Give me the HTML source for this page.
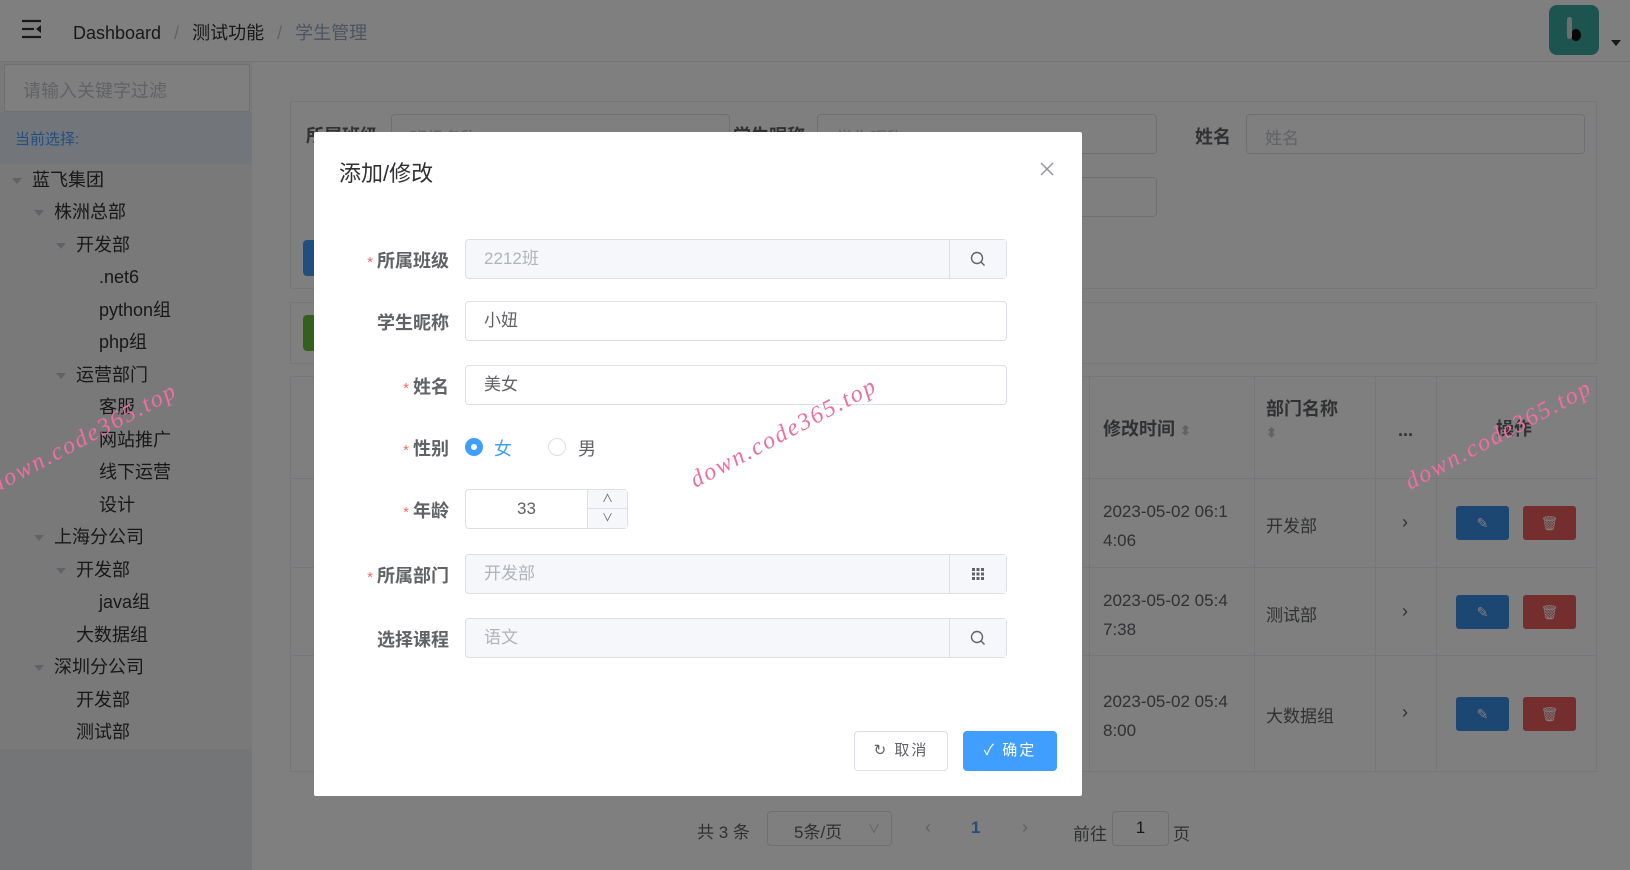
<!DOCTYPE html>
<html><head><meta charset="utf-8"><style>
*{box-sizing:border-box;margin:0;padding:0}
body{width:1630px;height:870px;position:relative;overflow:hidden;background:#fff;font-family:"Liberation Sans","Noto Sans CJK SC",sans-serif;color:#303133;font-size:18px}
.a{position:absolute}
.hdr{left:0;top:0;width:1630px;height:62px;border-bottom:1px solid #e6e6e6;background:#fff}
.side{left:0;top:62px;width:252px;height:808px;background:#f2f3f5}
.tree div{position:absolute;font-size:18px;line-height:24px;height:24px;color:#303133;white-space:nowrap}
.tri{display:inline-block;width:0;height:0;border-left:5px solid transparent;border-right:5px solid transparent;border-top:6px solid #c0c4cc;margin-right:10px;vertical-align:middle}
.card{border:1px solid #ebeef5;background:#fff}
.inp{border:1px solid #dcdfe6;border-radius:4px;background:#fff;white-space:nowrap}
.ov{left:0;top:0;width:1630px;height:870px;background:rgba(0,0,0,.5)}
.modal{left:314px;top:132px;width:768px;height:664px;background:#fff;border-radius:2px}
.lab{position:absolute;right:0;width:150px;text-align:right;font-weight:bold;font-size:18px;color:#606266}
.lab b{color:#f56c6c;font-weight:normal;margin-right:4px;font-size:15px}
.fi{position:absolute;left:151px;width:542px;height:40px;border:1px solid #dcdfe6;border-radius:4px;font-size:17px;padding-left:18px;line-height:38px}
.dis{background:#f5f7fa;color:#b0b3b9}
.app{position:absolute;right:0;top:0;width:57px;height:38px;border-left:1px solid #dcdfe6;background:#f5f7fa;display:flex;align-items:center;justify-content:center}
.wm{position:absolute;color:#f06ea0;font-family:"Liberation Serif",serif;font-size:24px;letter-spacing:2px;transform:rotate(-28deg);white-space:nowrap;font-style:italic}
.th{font-weight:bold;color:#606266;font-size:18px}
.ph{color:#c0c4cc;font-size:17px;padding:9px 18px}
.btn{display:flex;align-items:center;justify-content:center}
</style></head><body>
<div class="a hdr">
  <svg class="a" style="left:21px;top:19px" width="22" height="20" viewBox="0 0 22 20"><g stroke="#303133" stroke-width="2.2"><line x1="1" y1="2" x2="20" y2="2"/><line x1="1" y1="10" x2="13" y2="10"/><line x1="1" y1="18" x2="20" y2="18"/></g><path d="M20 6 L15 10 L20 14Z" fill="#303133"/></svg>
  <div class="a" style="left:73px;top:19px;font-size:18px;color:#303133">Dashboard <span style="color:#c0c4cc;margin:0 8px">/</span> 测试功能 <span style="color:#c0c4cc;margin:0 8px">/</span> <span style="color:#97a8be">学生管理</span></div>
  <div class="a" style="left:1549px;top:5px;width:50px;height:50px;border-radius:8px;background:#3aa8a0">
    <div class="a" style="left:22px;top:24px;width:10px;height:12px;border-radius:50%;background:#111"></div>
    <div class="a" style="left:18px;top:12px;width:5px;height:22px;background:#ddd;border-radius:3px"></div>
  </div>
  <div class="a" style="left:1611px;top:40px;width:0;height:0;border-left:5px solid transparent;border-right:5px solid transparent;border-top:6px solid #303133"></div>
</div>
<div class="a side">
  <div class="a inp" style="left:4px;top:2px;width:246px;height:48px;border-radius:2px;padding:12px 18px;color:#c0c4cc;font-size:18px">请输入关键字过滤</div>
  <div class="a" style="left:0;top:50px;width:252px;height:52px;background:#e4ecf7"><span class="a" style="left:15px;top:16px;font-size:15px;color:#409eff">当前选择:</span></div>
  <div class="tree">
    <div style="left:12px;top:106px"><span class="tri"></span>蓝飞集团</div>
    <div style="left:34px;top:138px"><span class="tri"></span>株洲总部</div>
    <div style="left:56px;top:171px"><span class="tri"></span>开发部</div>
    <div style="left:99px;top:203px">.net6</div>
    <div style="left:99px;top:236px">python组</div>
    <div style="left:99px;top:268px">php组</div>
    <div style="left:56px;top:301px"><span class="tri"></span>运营部门</div>
    <div style="left:99px;top:333px">客服</div>
    <div style="left:99px;top:366px">网站推广</div>
    <div style="left:99px;top:398px">线下运营</div>
    <div style="left:99px;top:431px">设计</div>
    <div style="left:34px;top:463px"><span class="tri"></span>上海分公司</div>
    <div style="left:56px;top:496px"><span class="tri"></span>开发部</div>
    <div style="left:99px;top:528px">java组</div>
    <div style="left:76px;top:561px">大数据组</div>
    <div style="left:34px;top:593px"><span class="tri"></span>深圳分公司</div>
    <div style="left:76px;top:626px">开发部</div>
    <div style="left:76px;top:658px">测试部</div>
  </div>
  <div class="a" style="left:0;top:687px;width:252px;height:121px;background:#e9eaee"></div>
</div>
<div class="a card" style="left:290px;top:101px;width:1307px;height:188px"></div>
<div class="a th" style="left:306px;top:122px">所属班级</div>
<div class="a inp ph" style="left:391px;top:114px;width:339px;height:40px">班级名称</div>
<div class="a th" style="left:733px;top:122px">学生昵称</div>
<div class="a inp ph" style="left:817px;top:114px;width:340px;height:40px">学生昵称</div>
<div class="a inp" style="left:817px;top:177px;width:340px;height:40px"></div>
<div class="a th" style="left:1195px;top:123px;color:#606266">姓名</div>
<div class="a inp ph" style="left:1246px;top:114px;width:339px;height:40px">姓名</div>
<div class="a" style="left:303px;top:240px;width:20px;height:36px;background:#409eff;border-radius:4px"></div>
<div class="a card" style="left:290px;top:302px;width:1307px;height:62px"></div>
<div class="a" style="left:303px;top:315px;width:20px;height:36px;background:#67c23a;border-radius:4px"></div>
<div class="a card" style="left:290px;top:376px;width:1307px;height:396px"></div>
<div class="a" style="left:1089px;top:376px;width:1px;height:396px;background:#ebeef5"></div>
<div class="a" style="left:1254px;top:376px;width:1px;height:396px;background:#ebeef5"></div>
<div class="a" style="left:1375px;top:376px;width:1px;height:396px;background:#ebeef5"></div>
<div class="a" style="left:1436px;top:376px;width:1px;height:396px;background:#ebeef5"></div>
<div class="a" style="left:290px;top:478px;width:1307px;height:1px;background:#ebeef5"></div>
<div class="a" style="left:290px;top:567px;width:1307px;height:1px;background:#ebeef5"></div>
<div class="a" style="left:290px;top:655px;width:1307px;height:1px;background:#ebeef5"></div>
<div class="a th" style="left:1103px;top:415px">修改时间 <span style="color:#c0c4cc;font-size:13px">⬍</span></div>
<div class="a th" style="left:1266px;top:395px">部门名称<br><span style="color:#c0c4cc;font-size:13px">⬍</span></div>
<div class="a th" style="left:1398px;top:420px">...</div>
<div class="a th" style="left:1496px;top:415px">操作</div>
<div class="a" style="left:1103px;top:497px;line-height:29px;font-size:17px;color:#606266">2023-05-02 06:1<br>4:06</div>
<div class="a" style="left:1103px;top:586px;line-height:29px;font-size:17px;color:#606266">2023-05-02 05:4<br>7:38</div>
<div class="a" style="left:1103px;top:687px;line-height:29px;font-size:17px;color:#606266">2023-05-02 05:4<br>8:00</div>
<div class="a" style="left:1266px;top:512px;font-size:17px;color:#606266">开发部</div>
<div class="a" style="left:1266px;top:601px;font-size:17px;color:#606266">测试部</div>
<div class="a" style="left:1266px;top:702px;font-size:17px;color:#606266">大数据组</div>
<div class="a" style="left:1402px;top:512px;color:#606266">›</div>
<div class="a" style="left:1402px;top:601px;color:#606266">›</div>
<div class="a" style="left:1402px;top:702px;color:#606266">›</div>
<div class="a btn" style="left:1456px;top:506px;width:53px;height:34px;background:#3a8ee6;border-radius:3px;color:#fff;font-size:14px">✎</div>
<div class="a btn" style="left:1523px;top:506px;width:53px;height:34px;background:#e85c5c;border-radius:3px;color:#fff;font-size:14px">🗑</div>
<div class="a btn" style="left:1456px;top:595px;width:53px;height:34px;background:#3a8ee6;border-radius:3px;color:#fff;font-size:14px">✎</div>
<div class="a btn" style="left:1523px;top:595px;width:53px;height:34px;background:#e85c5c;border-radius:3px;color:#fff;font-size:14px">🗑</div>
<div class="a btn" style="left:1456px;top:697px;width:53px;height:34px;background:#3a8ee6;border-radius:3px;color:#fff;font-size:14px">✎</div>
<div class="a btn" style="left:1523px;top:697px;width:53px;height:34px;background:#e85c5c;border-radius:3px;color:#fff;font-size:14px">🗑</div>
<div class="a" style="left:697px;top:818px;font-size:17px;color:#606266">共 3 条</div>
<div class="a inp" style="left:767px;top:811px;width:125px;height:35px;padding:6px 26px;font-size:17px;color:#606266">5条/页</div>
<div class="a" style="left:868px;top:820px;color:#c0c4cc;font-size:12px">∨</div>
<div class="a" style="left:925px;top:817px;color:#c0c4cc">‹</div>
<div class="a" style="left:971px;top:818px;color:#409eff;font-weight:bold;font-size:17px">1</div>
<div class="a" style="left:1022px;top:817px;color:#c0c4cc">›</div>
<div class="a" style="left:1073px;top:820px;font-size:17px;color:#606266">前往</div>
<div class="a inp" style="left:1112px;top:811px;width:57px;height:35px;text-align:center;padding-top:6px;font-size:17px">1</div>
<div class="a" style="left:1173px;top:820px;font-size:17px;color:#606266">页</div>

<div class="a ov"></div>

<div class="a modal">
  <div class="a" style="left:25px;top:24px;font-size:22px;color:#303133">添加/修改</div>
  <svg class="a" style="left:726px;top:30px" width="14" height="14" viewBox="0 0 14 14"><path d="M1 1L13 13M13 1L1 13" stroke="#909399" stroke-width="1.5"/></svg>
  <div class="a" style="left:0;top:107px;width:768px;height:40px"><div class="lab" style="right:633px;top:8px"><b>*</b>所属班级</div>
    <div class="fi dis" style="top:0">2212班<div class="app"><svg width="16" height="16" viewBox="0 0 16 16"><circle cx="7" cy="7" r="5.5" fill="none" stroke="#606266" stroke-width="1.4"/><path d="M11 11L14.5 14.5" stroke="#606266" stroke-width="1.4"/></svg></div></div></div>
  <div class="a" style="left:0;top:169px;width:768px;height:40px"><div class="lab" style="right:633px;top:8px">学生昵称</div>
    <div class="fi" style="top:0;color:#606266">小妞</div></div>
  <div class="a" style="left:0;top:233px;width:768px;height:40px"><div class="lab" style="right:633px;top:8px"><b>*</b>姓名</div>
    <div class="fi" style="top:0;color:#606266">美女</div></div>
  <div class="a" style="left:0;top:295px;width:768px;height:40px"><div class="lab" style="right:633px;top:8px"><b>*</b>性别</div>
    <div class="a" style="left:151px;top:11px;width:18px;height:18px;border-radius:50%;background:#409eff"><div class="a" style="left:6px;top:6px;width:6px;height:6px;border-radius:50%;background:#fff"></div></div>
    <div class="a" style="left:180px;top:8px;color:#409eff">女</div>
    <div class="a" style="left:234px;top:11px;width:18px;height:18px;border-radius:50%;border:1px solid #dcdfe6"></div>
    <div class="a" style="left:264px;top:8px;color:#606266">男</div></div>
  <div class="a" style="left:0;top:357px;width:768px;height:40px"><div class="lab" style="right:633px;top:8px"><b>*</b>年龄</div>
    <div class="a inp" style="left:151px;top:0;width:163px;height:40px;text-align:center;padding-right:40px;line-height:38px;font-size:17px;color:#606266">33
      <div class="a" style="right:0;top:0;width:40px;height:38px;border-left:1px solid #dcdfe6;background:#f5f7fa"><div style="height:19px;border-bottom:1px solid #dcdfe6;font-size:11px;line-height:19px;color:#606266">∧</div><div style="font-size:11px;line-height:18px;color:#606266">∨</div></div></div></div>
  <div class="a" style="left:0;top:422px;width:768px;height:40px"><div class="lab" style="right:633px;top:8px"><b>*</b>所属部门</div>
    <div class="fi dis" style="top:0">开发部<div class="app"><svg width="12" height="12" viewBox="0 0 12 12" fill="#606266"><rect x="0" y="0" width="3" height="3"/><rect x="4.5" y="0" width="3" height="3"/><rect x="9" y="0" width="3" height="3"/><rect x="0" y="4.5" width="3" height="3"/><rect x="4.5" y="4.5" width="3" height="3"/><rect x="9" y="4.5" width="3" height="3"/><rect x="0" y="9" width="3" height="3"/><rect x="4.5" y="9" width="3" height="3"/><rect x="9" y="9" width="3" height="3"/></svg></div></div></div>
  <div class="a" style="left:0;top:486px;width:768px;height:40px"><div class="lab" style="right:633px;top:8px">选择课程</div>
    <div class="fi dis" style="top:0">语文<div class="app"><svg width="16" height="16" viewBox="0 0 16 16"><circle cx="7" cy="7" r="5.5" fill="none" stroke="#606266" stroke-width="1.4"/><path d="M11 11L14.5 14.5" stroke="#606266" stroke-width="1.4"/></svg></div></div></div>
  <div class="a inp" style="left:540px;top:599px;width:94px;height:40px;line-height:38px;text-align:center;font-size:15px;color:#606266;letter-spacing:2px">↻ 取消</div>
  <div class="a" style="left:649px;top:599px;width:94px;height:40px;border-radius:4px;background:#409eff;color:#fff;line-height:40px;text-align:center;font-size:15px;letter-spacing:2px">✓ 确定</div>
</div>

<div class="wm" style="left:-20px;top:425px">down.code365.top</div>
<div class="wm" style="left:680px;top:420px">down.code365.top</div>
<div class="wm" style="left:1395px;top:422px">down.code365.top</div>
</body></html>
